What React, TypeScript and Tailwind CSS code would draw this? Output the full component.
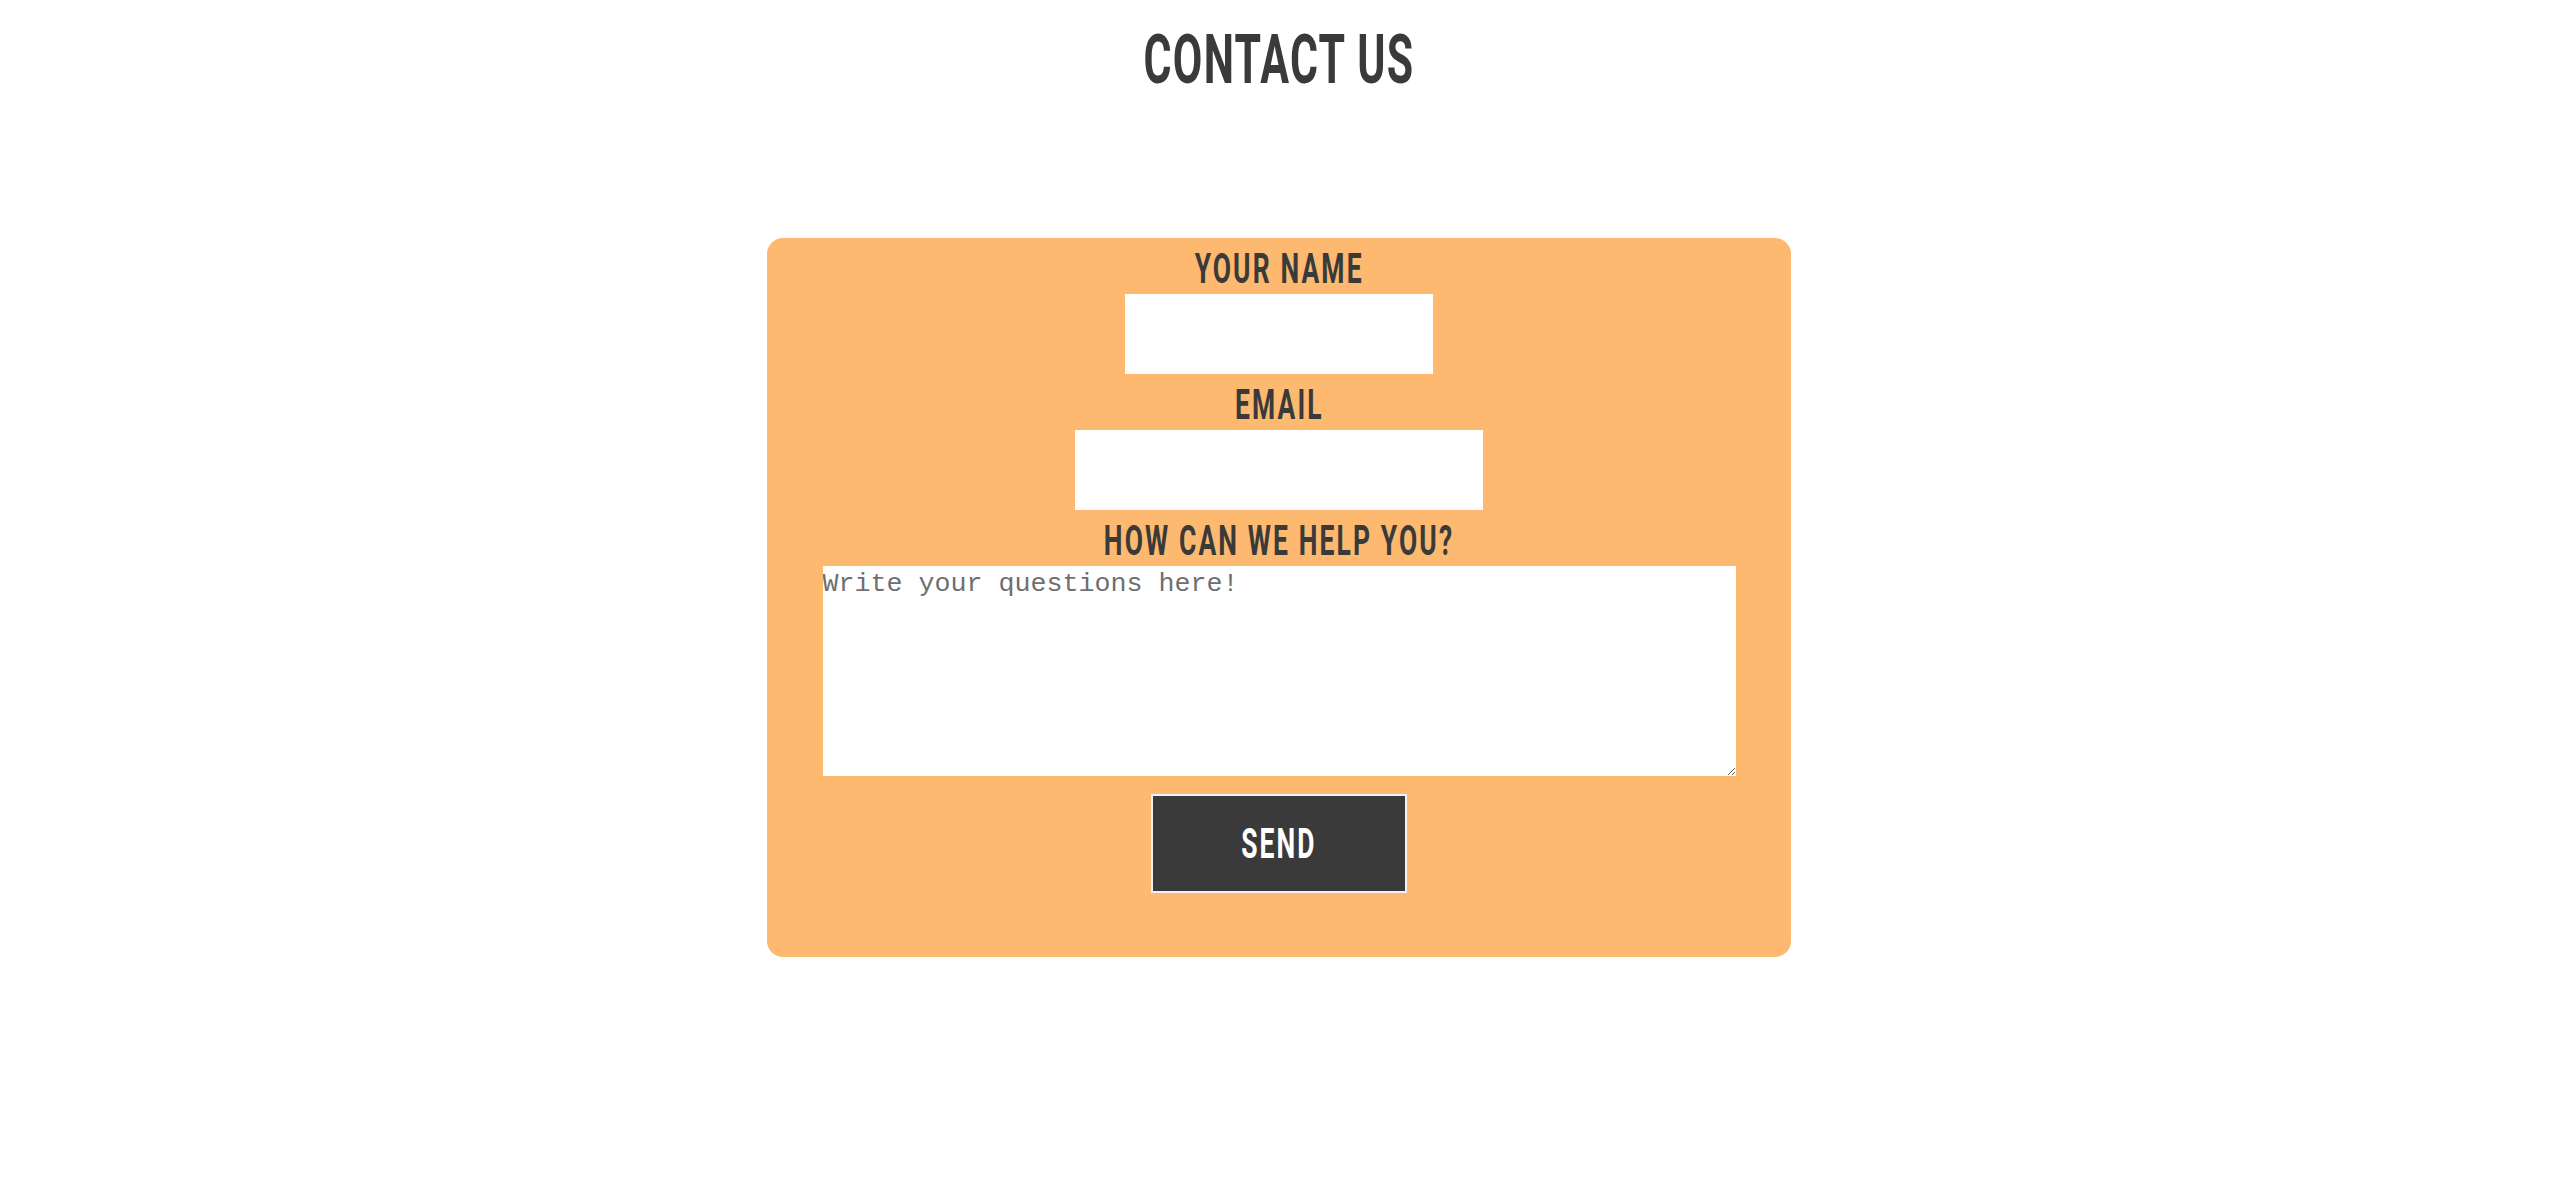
import React from "react";

function Label({ children, className = "" }: { children: React.ReactNode; className?: string }) {
  return (
    <label className={"block h-[42px] text-center text-[42px] leading-[42px] font-bold text-[#3a3a3a] " + className}>
      <span className="inline-block scale-x-[0.63] tracking-[0.08em]">{children}</span>
    </label>
  );
}

export default function App() {
  return (
    <div className="min-h-[1190px] w-full bg-white font-['Roboto',sans-serif]">
      <h1 className="pt-[26px] h-[94px] text-center text-[68px] leading-[68px] font-bold text-[#3a3a3a]">
        <span className="inline-block scale-x-[0.63] tracking-[0.03em]">CONTACT US</span>
      </h1>
      <form
        className="mx-auto mt-[144px] flex h-[719px] w-[1024px] flex-col items-center rounded-[16px] bg-[#fcb96f] pt-[10px]"
        onSubmit={(e) => e.preventDefault()}
      >
        <Label>YOUR NAME</Label>
        <input type="text" className="mt-[4px] h-[80px] w-[308px] bg-white outline-none" />
        <Label className="mt-[10px]">EMAIL</Label>
        <input type="email" className="mt-[4px] h-[80px] w-[408px] bg-white outline-none" />
        <Label className="mt-[10px]">HOW CAN WE HELP YOU?</Label>
        <textarea
          placeholder="Write your questions here!"
          className="mt-[4px] h-[210px] w-[913px] bg-white px-0 pt-[3px] font-['Liberation_Mono',monospace] text-[26.67px] leading-[30px] text-[#3a3a3a] outline-none placeholder:text-[#6f6f6f]"
        />
        <button
          type="submit"
          className="mt-[18px] flex h-[99px] w-[256px] items-center justify-center border-2 border-[#f2f2f2] bg-[#3a3a3a] text-[42px] leading-[42px] font-bold text-white"
        >
          <span className="inline-block scale-x-[0.63] tracking-[0.08em]">SEND</span>
        </button>
      </form>
    </div>
  );
}
